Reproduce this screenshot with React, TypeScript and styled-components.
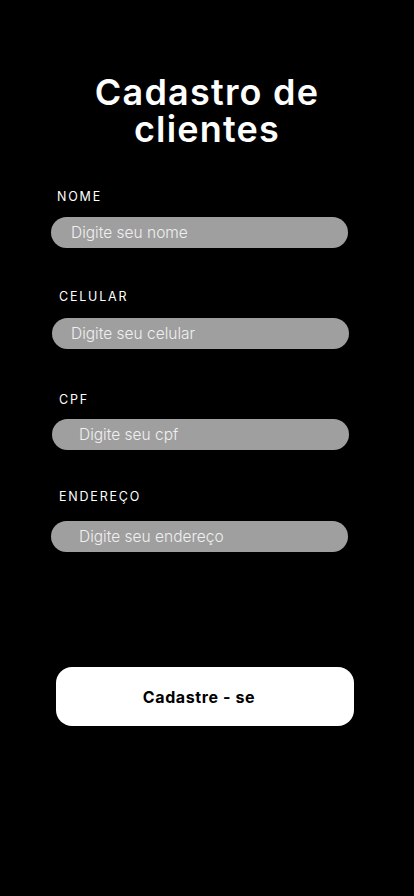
import styled, { createGlobalStyle } from "styled-components";

const fields = [
  { label: "NOME", placeholder: "Digite seu nome", left: 51, labelLeft: 6, pad: 20, gap: 12, top: 0 },
  { label: "CELULAR", placeholder: "Digite seu celular", left: 52, labelLeft: 7, pad: 19, gap: 13, top: 41 },
  { label: "CPF", placeholder: "Digite seu cpf", left: 52, labelLeft: 7, pad: 27, gap: 11, top: 43 },
  { label: "ENDEREÇO", placeholder: "Digite seu endereço", left: 51, labelLeft: 8, pad: 28, gap: 16, top: 39 },
];

function App() {
  return (
    <Page>
      <GlobalStyle />
      <Title>
        Cadastro de
        <br />
        clientes
      </Title>
      <Form onSubmit={e => e.preventDefault()}>
        {fields.map(f => (
          <Field key={f.label} $left={f.left} $gap={f.gap} $top={f.top}>
            <Label $indent={f.labelLeft}>{f.label}</Label>
            <Input placeholder={f.placeholder} $pad={f.pad} />
          </Field>
        ))}
        <Button type="submit">Cadastre - se</Button>
      </Form>
    </Page>
  );
}

export default App;

const GlobalStyle = createGlobalStyle`
  body {
    margin: 0;
    background: #000;
    font-family: "Inter", "Open Sans", sans-serif;
  }
`;

const Page = styled.div`
  width: 414px;
  min-height: 896px;
  background: #000;
  display: flex;
  flex-direction: column;
  padding-top: 74px;
  box-sizing: border-box;
`;

const Title = styled.h1`
  margin: 0 0 41px;
  text-align: center;
  color: #fff;
  font-size: 36px;
  font-weight: 600;
  line-height: 37px;
  letter-spacing: 1.2px;
`;

const Form = styled.form`
  display: flex;
  flex-direction: column;
`;

const Field = styled.label<{ $left: number; $gap: number; $top: number }>`
  display: flex;
  flex-direction: column;
  gap: ${p => p.$gap}px;
  margin-left: ${p => p.$left}px;
  margin-top: ${p => p.$top}px;
`;

const Label = styled.span<{ $indent: number }>`
  padding-left: ${p => p.$indent}px;
  color: #fff;
  font-size: 12.5px;
  line-height: 16px;
  letter-spacing: 1.8px;
  font-weight: 400;
`;

const Input = styled.input<{ $pad: number }>`
  width: 297px;
  height: 31px;
  box-sizing: border-box;
  border: none;
  border-radius: 16px;
  background: #9f9f9f;
  padding: 0 0 0 ${p => p.$pad}px;
  font-family: inherit;
  font-size: 15.5px;
  font-weight: 300;
  color: #fff;
  outline: none;

  &::placeholder {
    color: #f0f0f0;
  }
`;

const Button = styled.button`
  margin: 115px 0 0 56px;
  width: 298px;
  height: 59px;
  padding: 0 12px 0 0;
  border: none;
  border-radius: 16px;
  background: #fff;
  color: #000;
  font-family: inherit;
  font-size: 16px;
  font-weight: 700;
  letter-spacing: 0.6px;
  cursor: pointer;
`;
